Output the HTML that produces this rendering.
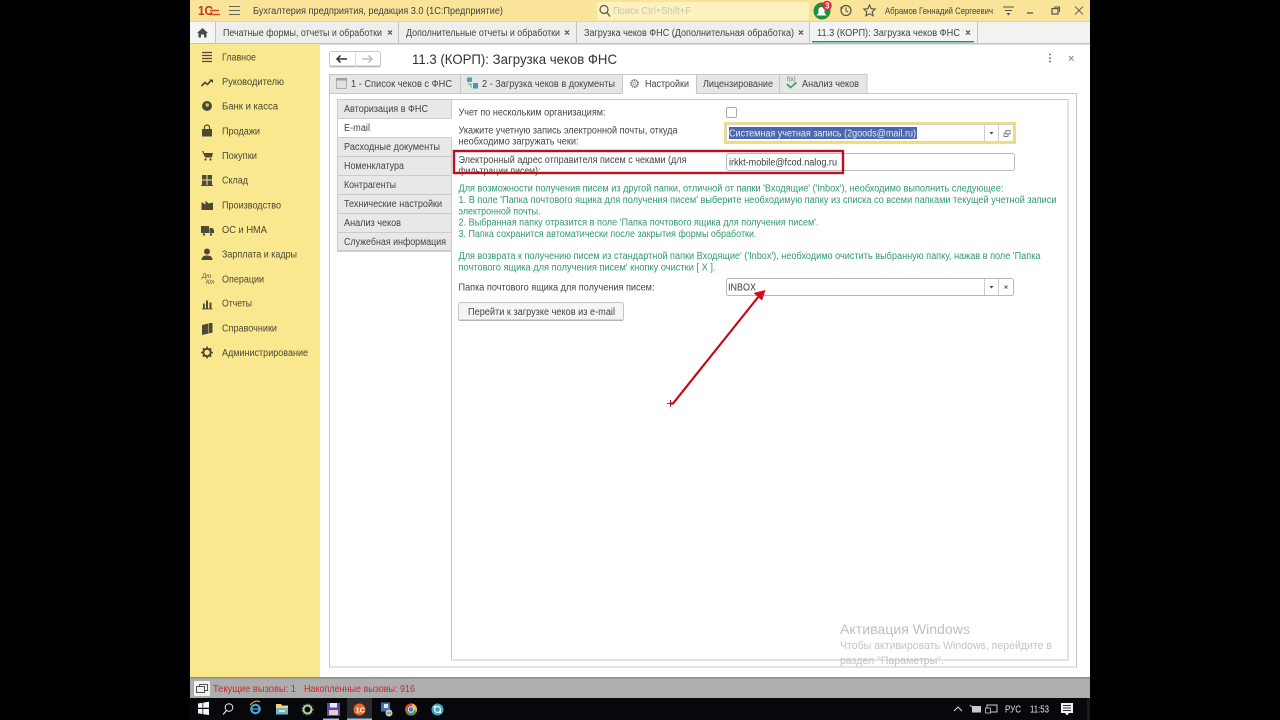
<!DOCTYPE html>
<html lang="ru"><head><meta charset="utf-8"><title>11.3 (КОРП): Загрузка чеков ФНС</title>
<style>
html,body{margin:0;padding:0;background:#000;width:1280px;height:720px;overflow:hidden}
svg{display:block;position:absolute;left:0;top:0;filter:blur(.35px)}
text{font-family:"Liberation Sans",sans-serif;font-size:10px;fill:#444442}
.g text,text.g{fill:#2f9a6c}
.s text{fill:#4a4734}
</style></head><body>
<svg width="1280" height="720" viewBox="0 0 1280 720" xmlns="http://www.w3.org/2000/svg">
<rect width="1280" height="720" fill="#000"/>
<rect x="190" y="0" width="900" height="698" fill="#fff"/>
<!-- title bar -->
<rect x="190" y="0" width="900" height="22" fill="#f9e49a"/>
<rect x="190" y="21" width="900" height="1" fill="#e3d6a0"/>
<text x="198" y="15" style="font-size:13px;font-weight:bold;fill:#c8331c" textLength="15" lengthAdjust="spacingAndGlyphs">1С</text>
<path d="M210 10.500h9M210 14.500h10" stroke="#d24a22" stroke-width="1.500"/>
<path d="M229 6.500h11M229 10.500h11M229 14.500h11" stroke="#66655a" stroke-width="1.100"/>
<text x="253" y="14" textLength="250" lengthAdjust="spacingAndGlyphs">Бухгалтерия предприятия, редакция 3.0  (1С:Предприятие)</text>
<rect x="597" y="2" width="212" height="18" rx="2" fill="#fdf1bd"/>
<circle cx="604" cy="9.500" r="4" fill="none" stroke="#555" stroke-width="1.200"/><path d="M607 12.500l3 4" stroke="#555" stroke-width="1.300"/>
<text x="613" y="14" style="fill:#c9c5b0" textLength="78" lengthAdjust="spacingAndGlyphs">Поиск Ctrl+Shift+F</text>
<!-- bell -->
<circle cx="822" cy="11" r="8.500" fill="#1f8f40"/>
<path d="M816.500 15.500l2-2.500v-3a3 3 0 0 1 6 0v3l2 2.500z" fill="#fff"/>
<circle cx="827" cy="5.500" r="4.800" fill="#dd2c3a"/>
<text x="825" y="8.500" style="font-size:8px;fill:#fff;font-weight:bold">3</text>
<circle cx="846" cy="10.500" r="5" fill="none" stroke="#55544a" stroke-width="1.200"/><path d="M846 7.500v3.200l2.300 1.500" fill="none" stroke="#55544a"/><path d="M840 7l1 3 2-2z" fill="#55544a"/>
<path d="M869.500 5l1.700 3.700 4 .4-3 2.700.9 4-3.600-2.100-3.600 2.100.9-4-3-2.700 4-.4z" fill="none" stroke="#55544a" stroke-width="1.100"/>
<text x="885" y="14" style="font-size:9px" textLength="108" lengthAdjust="spacingAndGlyphs">Абрамов Геннадий Сергеевич</text>
<path d="M1003 7h11M1005 10.500h7" stroke="#55544a" stroke-width="1.100"/><path d="M1006.500 13h4l-2 2.500z" fill="#55544a"/>
<path d="M1027 13h6" stroke="#55544a" stroke-width="1.300"/>
<rect x="1052" y="8.500" width="6" height="5.500" fill="none" stroke="#55544a" stroke-width="1.200"/><path d="M1054 7h5.500v5" fill="none" stroke="#55544a"/>
<path d="M1075 6.500l8 8M1083 6.500l-8 8" stroke="#66655a" stroke-width="1"/>
<!-- tabs -->
<rect x="190" y="22" width="900" height="22" fill="#eeeeee"/>
<rect x="190" y="43" width="900" height="1.500" fill="#c2c2c2"/>
<rect x="977" y="22" width="113" height="21" fill="#f2f2f2"/>
<rect x="809" y="22" width="168" height="21" fill="#f4f4f4"/>
<rect x="190" y="22" width="25" height="21" fill="#f4f4f4"/>
<path d="M215.500 22v21M398.500 22v21M576.500 22v21M809.500 22v21M977.500 22v21" stroke="#c4c4c4"/>
<path d="M197 33l5.500-5 5.500 5h-1.500v4.500h-2.500v-3h-3v3h-2.500V33z" fill="#4a4a4a"/>
<text x="223" y="36" textLength="159" lengthAdjust="spacingAndGlyphs">Печатные формы, отчеты и обработки</text>
<text x="406" y="36" textLength="154" lengthAdjust="spacingAndGlyphs">Дополнительные отчеты и обработки</text>
<text x="584" y="36" textLength="210" lengthAdjust="spacingAndGlyphs">Загрузка чеков ФНС (Дополнительная обработка)</text>
<text x="817" y="36" textLength="143" lengthAdjust="spacingAndGlyphs">11.3 (КОРП): Загрузка чеков ФНС</text>
<path d="M388 30.500l4 4M392 30.500l-4 4M565 30.500l4 4M569 30.500l-4 4M799 30.500l4 4M803 30.500l-4 4M966 30.500l4 4M970 30.500l-4 4" stroke="#444" stroke-width="1.200"/>
<rect x="812" y="41" width="162" height="1.500" fill="#1d9a5f"/>
<!-- sidebar -->
<rect x="190" y="44" width="130" height="634" fill="#fae88f"/>
<g class="s">
<text x="222" y="60.500" textLength="34" lengthAdjust="spacingAndGlyphs">Главное</text>
<text x="222" y="85" textLength="62" lengthAdjust="spacingAndGlyphs">Руководителю</text>
<text x="222" y="109.500" textLength="56" lengthAdjust="spacingAndGlyphs">Банк и касса</text>
<text x="222" y="134.500" textLength="38" lengthAdjust="spacingAndGlyphs">Продажи</text>
<text x="222" y="159" textLength="35" lengthAdjust="spacingAndGlyphs">Покупки</text>
<text x="222" y="183.500" textLength="26" lengthAdjust="spacingAndGlyphs">Склад</text>
<text x="222" y="208.500" textLength="59" lengthAdjust="spacingAndGlyphs">Производство</text>
<text x="222" y="233" textLength="45" lengthAdjust="spacingAndGlyphs">ОС и НМА</text>
<text x="222" y="257.500" textLength="75" lengthAdjust="spacingAndGlyphs">Зарплата и кадры</text>
<text x="222" y="282.500" textLength="42" lengthAdjust="spacingAndGlyphs">Операции</text>
<text x="222" y="306.500" textLength="30" lengthAdjust="spacingAndGlyphs">Отчеты</text>
<text x="222" y="331.500" textLength="55" lengthAdjust="spacingAndGlyphs">Справочники</text>
<text x="222" y="356" textLength="86" lengthAdjust="spacingAndGlyphs">Администрирование</text>
</g>
<g fill="#4c4a34" stroke="none">
<path d="M202 52.500h10M202 55.500h10M202 58.500h10M202 61.500h10" stroke="#4c4a34" stroke-width="1.300"/>
<path d="M201.500 86l3.500-3.500 2.500 2 3.500-4" fill="none" stroke="#4c4a34" stroke-width="1.700"/><path d="M209 79.500h4v3.500z"/>
<circle cx="207" cy="106" r="5"/><circle cx="207.300" cy="105" r="1.700" fill="#c9bf7a"/>
<path d="M202 129h10v7.500h-10z"/><path d="M204.500 129v-1.500a2.500 2.500 0 0 1 5 0v1.500" fill="none" stroke="#4c4a34" stroke-width="1.200"/>
<path d="M202 151h1.500l.5 2h9l-1.200 4.500h-6.600z"/><circle cx="205.500" cy="159.500" r="1.100"/><circle cx="210.500" cy="159.500" r="1.100"/>
<path d="M202 175h4.500v4.500H202zM207.500 175h4.500v4.500h-4.500zM202 180.500h4.500v4.500H202zM207.500 180.500h4.500v4.500h-4.500z"/><rect x="201" y="185" width="12" height="1"/>
<path d="M201.500 210v-8l4 2.500v-4l3 3 4.500-1v7.500z"/>
<path d="M201 226h8v7h-8zM209.500 228h3l1.500 2v3h-4.500z"/><circle cx="204" cy="234.500" r="1.200"/><circle cx="211" cy="234.500" r="1.200"/>
<circle cx="207" cy="251.500" r="3"/><path d="M201.500 260c0-3.500 2.500-4.500 5.500-4.500s5.500 1 5.500 4.500z"/>
<path d="M203 308.500h1.800v-5H203zM206 308.500h2v-8h-2zM209.500 308.500h2v-6h-2z"/><rect x="202" y="308.500" width="10.500" height=".9"/>
<path d="M202 325l6.500-1.500v10l-6.500 1.500zM209 323h3.500v9.500l-3.500 1z"/>
<circle cx="207" cy="352.500" r="3.700" fill="none" stroke="#4c4a34" stroke-width="2"/>
<path d="M207 346.500v2M207 356.500v2M201 352.500h2M211 352.500h2M202.800 348.300l1.400 1.400M209.800 355.300l1.400 1.400M211.200 348.300l-1.400 1.400M204.200 355.300l-1.400 1.400" stroke="#4c4a34" stroke-width="1.600"/>
</g>
<text x="202" y="278" style="font-size:6px;fill:#4c4a34;font-style:italic">Дт</text>
<text x="206" y="284" style="font-size:6px;fill:#4c4a34;font-style:italic">Кт</text>
<!-- nav buttons -->
<rect x="329.500" y="51.500" width="51" height="15.500" rx="2" fill="#fff" stroke="#c8c8c8"/>
<rect x="330" y="65.500" width="50" height="1.500" fill="#bbb"/>
<path d="M355.500 52v15" stroke="#ddd"/>
<path d="M337 59h10" stroke="#3a3a3a" stroke-width="1.600"/><path d="M340.500 55.500L337 59l3.500 3.500" fill="none" stroke="#3a3a3a" stroke-width="1.600"/>
<path d="M362 59h10" stroke="#b5b5b5" stroke-width="1.300"/><path d="M368.500 55.500L372 59l-3.500 3.500" fill="none" stroke="#b5b5b5" stroke-width="1.300"/>
<text x="412" y="64" style="font-size:14px;fill:#333" textLength="205" lengthAdjust="spacingAndGlyphs">11.3 (КОРП): Загрузка чеков ФНС</text>
<circle cx="1050" cy="54.500" r=".9" fill="#555"/><circle cx="1050" cy="58" r=".9" fill="#555"/><circle cx="1050" cy="61.500" r=".9" fill="#555"/>
<path d="M1069 56l4.500 4.500M1073.500 56l-4.500 4.500" stroke="#888"/>
<!-- form tabs -->
<rect x="329" y="74" width="538" height="19" fill="#e6e6e6"/>
<rect x="622" y="74" width="74" height="20" fill="#fff"/>
<path d="M329.500 93V74.500h537.500V93M460.500 74v19M622.500 74v19M696.500 74v19M779.500 74v19" fill="none" stroke="#c6c6c6"/>
<rect x="336.500" y="78.500" width="10" height="10" fill="#e0e0e0" stroke="#a8b0b0"/><rect x="336" y="78" width="11" height="2.500" fill="#98a4a4"/>
<rect x="467" y="77.500" width="5" height="4.500" fill="#4aa0c0"/><rect x="473" y="83" width="5" height="5.500" fill="#4f93b0"/>
<path d="M468 84h3v3.500" fill="none" stroke="#5a9a8c"/>
<text x="351" y="87" textLength="101" lengthAdjust="spacingAndGlyphs">1 - Список чеков с ФНС</text>
<text x="482" y="87" textLength="133" lengthAdjust="spacingAndGlyphs">2 - Загрузка чеков в документы</text>
<text x="645" y="87" textLength="44" lengthAdjust="spacingAndGlyphs">Настройки</text>
<text x="703" y="87" textLength="70" lengthAdjust="spacingAndGlyphs">Лицензирование</text>
<text x="802" y="87" textLength="57" lengthAdjust="spacingAndGlyphs">Анализ чеков</text>
<circle cx="634.500" cy="83.500" r="3.500" fill="none" stroke="#777" stroke-width="1.800" stroke-dasharray="1.500 .7"/>
<circle cx="634.500" cy="83.500" r="1.500" fill="none" stroke="#999" stroke-width=".7"/>
<text x="787" y="81" style="font-size:6px;fill:#5a7a6a">f(x)</text>
<path d="M787 84l3.500 3.500 6-5" fill="none" stroke="#35a060" stroke-width="1.700"/>
<!-- panels -->
<rect x="329.500" y="93.500" width="747" height="573.500" fill="#fff" stroke="#c8c8c8"/>
<rect x="622.500" y="92.500" width="73" height="2" fill="#fff"/>
<rect x="451.500" y="99.500" width="616.500" height="560.500" fill="#fff" stroke="#c8c8c8"/>
<!-- left tabs -->
<rect x="337" y="99" width="115" height="152" fill="#e8e8e8"/>
<rect x="337" y="118" width="115" height="19" fill="#fff"/>
<path d="M337.500 99.500h114M337.500 118.500h114M337.500 137.500h114M337.500 156.500h114M337.500 175.500h114M337.500 194.500h114M337.500 213.500h114M337.500 232.500h114M337.500 99.500v152M451.500 99v19M451.500 137v114" fill="none" stroke="#cbcbcb"/>
<path d="M337.500 251h114" stroke="#b4b4b4" stroke-width="1.200"/>
<text x="344" y="112" textLength="84" lengthAdjust="spacingAndGlyphs">Авторизация в ФНС</text>
<text x="344" y="131" textLength="26" lengthAdjust="spacingAndGlyphs">E-mail</text>
<text x="344" y="150" textLength="96" lengthAdjust="spacingAndGlyphs">Расходные документы</text>
<text x="344" y="169" textLength="60" lengthAdjust="spacingAndGlyphs">Номенклатура</text>
<text x="344" y="188" textLength="52" lengthAdjust="spacingAndGlyphs">Контрагенты</text>
<text x="344" y="207" textLength="98" lengthAdjust="spacingAndGlyphs">Технические настройки</text>
<text x="344" y="226" textLength="57" lengthAdjust="spacingAndGlyphs">Анализ чеков</text>
<text x="344" y="245" textLength="102" lengthAdjust="spacingAndGlyphs">Служебная информация</text>
<!-- form -->
<text x="458.500" y="115.500" textLength="147" lengthAdjust="spacingAndGlyphs">Учет по нескольким организациям:</text>
<rect x="726.500" y="107.500" width="10" height="10" rx="1.500" fill="#fff" stroke="#aaa"/>
<text x="458.500" y="133.500" textLength="219" lengthAdjust="spacingAndGlyphs">Укажите учетную запись электронной почты, откуда</text>
<text x="458.500" y="144.500" textLength="120" lengthAdjust="spacingAndGlyphs">необходимо загружать чеки:</text>
<rect x="725" y="123" width="290" height="20" fill="#fff" stroke="#ecd65c" stroke-width="1.600"/>
<rect x="726.500" y="124.500" width="287" height="17" fill="#fff" stroke="#d4d4d4"/>
<rect x="729" y="127" width="188" height="12" fill="#4a66ae"/>
<text x="729" y="136.500" style="fill:#e8ecf6" textLength="187" lengthAdjust="spacingAndGlyphs">Системная учетная запись (2goods@mail.ru)</text>
<path d="M984.500 125v16M998.500 125v16" stroke="#ccc"/>
<path d="M989.500 132h4l-2 2.500z" fill="#444"/>
<rect x="1004" y="133" width="4" height="3.500" fill="none" stroke="#666" stroke-width=".8"/><rect x="1006" y="130.500" width="4" height="3.500" fill="#fff" stroke="#666" stroke-width=".8"/>
<!-- email field -->
<rect x="726.500" y="153.500" width="288" height="17" rx="2" fill="#fff" stroke="#bcbcbc"/>
<text x="729" y="165.500" style="fill:#3c3c3c" textLength="108" lengthAdjust="spacingAndGlyphs">irkkt-mobile@fcod.nalog.ru</text>
<text x="458.500" y="163" textLength="228" lengthAdjust="spacingAndGlyphs">Электронный адрес отправителя писем с чеками (для</text>
<text x="458.500" y="174" textLength="82" lengthAdjust="spacingAndGlyphs">фильтрации писем):</text>
<rect x="454" y="151" width="389" height="22" fill="none" stroke="#bb1020" stroke-width="2.400"/>
<!-- green text -->
<g class="g">
<text x="458.500" y="191.500" textLength="545" lengthAdjust="spacingAndGlyphs">Для возможности получения писем из другой папки, отличной от папки 'Входящие' ('Inbox'), необходимо выполнить следующее:</text>
<text x="458.500" y="203" textLength="598" lengthAdjust="spacingAndGlyphs">1. В поле 'Папка почтового ящика для получения писем' выберите необходимую папку из списка со всеми папками текущей учетной записи</text>
<text x="458.500" y="214.500" textLength="82" lengthAdjust="spacingAndGlyphs">электронной почты.</text>
<text x="458.500" y="225.500" textLength="360" lengthAdjust="spacingAndGlyphs">2. Выбранная папку отразится в поле 'Папка почтового ящика для получения писем'.</text>
<text x="458.500" y="237" textLength="298" lengthAdjust="spacingAndGlyphs">3. Папка сохранится автоматически после закрытия формы обработки.</text>
<text x="458.500" y="259" textLength="582" lengthAdjust="spacingAndGlyphs">Для возврата к получению писем из стандартной папки Входящие' ('Inbox'), необходимо очистить выбранную папку, нажав в поле 'Папка</text>
<text x="458.500" y="270.500" textLength="257" lengthAdjust="spacingAndGlyphs">почтового ящика для получения писем'  кнопку очистки [ X ].</text>
</g>
<text x="458.500" y="290.500" textLength="196" lengthAdjust="spacingAndGlyphs">Папка почтового ящика для получения писем:</text>
<rect x="726.500" y="278.500" width="287" height="17" rx="2" fill="#fff" stroke="#b8b8b8"/>
<path d="M984.500 279v16M998.500 279v16" stroke="#ccc"/>
<text x="728" y="290.500" style="fill:#3c3c3c" textLength="28" lengthAdjust="spacingAndGlyphs">INBOX</text>
<path d="M989.500 286h4l-2 2.500z" fill="#444"/>
<path d="M1004.500 285.500l3 3M1007.500 285.500l-3 3" stroke="#666" stroke-width=".9"/>
<rect x="458.500" y="302.500" width="165" height="18" rx="2" fill="#f5f5f5" stroke="#c4c4c4"/>
<rect x="459" y="319.500" width="164" height="1.500" fill="#b5b5b5"/>
<text x="468" y="315" textLength="147" lengthAdjust="spacingAndGlyphs">Перейти к загрузке чеков из e-mail</text>
<!-- arrow -->
<path d="M671 403.500h2L759 296" fill="none" stroke="#c40a18" stroke-width="2.200"/>
<path d="M765.500 290l-12 3 8.500 7.500z" fill="#d80a1a"/>
<path d="M667 403.500h7M670.500 400v7" stroke="#a52030" stroke-width="1.100"/>
<!-- watermark -->
<text x="840" y="634" style="font-size:14px;fill:#bfbfbf" textLength="130" lengthAdjust="spacingAndGlyphs">Активация Windows</text>
<text x="840" y="649" style="font-size:11px;fill:#c4c4c4" textLength="212" lengthAdjust="spacingAndGlyphs">Чтобы активировать Windows, перейдите в</text>
<text x="840" y="664" style="font-size:11px;fill:#c4c4c4" textLength="104" lengthAdjust="spacingAndGlyphs">раздел "Параметры".</text>
<!-- status -->
<rect x="190" y="678" width="900" height="20" fill="#aeaeae"/>
<rect x="190" y="677" width="900" height="1.500" fill="#8f8f8f"/>
<rect x="194" y="681" width="16" height="15" rx="1" fill="#f2f2f2"/>
<rect x="199.500" y="684.500" width="8" height="6" fill="none" stroke="#555"/><rect x="196.500" y="686.500" width="8" height="6" fill="#f2f2f2" stroke="#555"/>
<text x="213" y="692" style="fill:#c42a35" textLength="83" lengthAdjust="spacingAndGlyphs">Текущие вызовы: 1</text>
<text x="304" y="692" style="fill:#c42a35" textLength="111" lengthAdjust="spacingAndGlyphs">Накопленные вызовы: 916</text>
<!-- taskbar -->
<rect x="190" y="698" width="900" height="22" fill="#07080c"/>
<rect x="347" y="698" width="25" height="22" fill="#2a2b2e"/>
<path d="M198 703.500l4.500-.7v5h-4.500zM203.200 702.600l5.800-.9v6.100h-5.800zM198 709h4.500v5l-4.500-.6zM203.200 709h5.800v6l-5.800-.8z" fill="#f5f5f5"/>
<circle cx="229" cy="707.500" r="3.800" fill="none" stroke="#e8e8e8" stroke-width="1"/><path d="M226.500 710.500l-3.500 4" stroke="#e8e8e8" stroke-width="1.100"/>
<circle cx="255.500" cy="709" r="4.200" fill="none" stroke="#4da3d8" stroke-width="2.200"/><path d="M251 709h9" stroke="#4da3d8" stroke-width="1.300"/><path d="M250 705q6-6 10-3" fill="none" stroke="#e6c040" stroke-width="1"/>
<path d="M276 704h5l1 1.500h6v9h-12z" fill="#f0d67a"/><rect x="276" y="708" width="12" height="6.500" fill="#6ab4d8"/><rect x="279" y="710" width="6" height="2" fill="#f0e0a0"/>
<circle cx="307.500" cy="709.500" r="4" fill="none" stroke="#bcd0a8" stroke-width="2"/><circle cx="307.500" cy="709.500" r="5.500" fill="none" stroke="#5a8a40" stroke-width="1" stroke-dasharray="1.500 1.500"/>
<rect x="327" y="703" width="13" height="13" fill="#5a4ab0"/><rect x="330" y="703" width="7" height="4.500" fill="#e8e8f4"/><rect x="329" y="710" width="9" height="5" fill="#f0c8d0"/>
<circle cx="359.500" cy="709.500" r="6" fill="#e8662a"/><text x="355.500" y="712.500" style="font-size:7.500px;font-weight:bold;fill:#fff">1С</text>
<rect x="381" y="702.500" width="9" height="9" fill="#3f6fb8"/><rect x="384" y="704" width="4" height="4" fill="#dfe8f4"/><circle cx="389" cy="713" r="3.500" fill="#c4c8c0"/><path d="M387 713h4" stroke="#4a7a4a"/>
<circle cx="411" cy="709.500" r="6" fill="#d8473a"/><path d="M411 703.500a6 6 0 0 1 5.200 9l-3-5z" fill="#e8c13a"/><path d="M405.800 712.500a6 6 0 0 0 10.400 0l-3-1z" fill="#4aa050"/><circle cx="411" cy="709.500" r="2.800" fill="#3a7ed8" stroke="#eee" stroke-width=".9"/>
<circle cx="437.500" cy="709.500" r="6" fill="#3ea7c0"/><circle cx="437.500" cy="709.500" r="3" fill="none" stroke="#e8f4f4" stroke-width="1.200"/><circle cx="435" cy="707" r="1.300" fill="#eef"/><circle cx="440" cy="712" r="1.300" fill="#eef"/>
<rect x="323" y="718.500" width="16" height="1.500" fill="#9ac4e4"/><rect x="347" y="718.500" width="25" height="1.500" fill="#9ac4e4"/>
<!-- tray -->
<path d="M954 711l4-4 4 4" fill="none" stroke="#ddd" stroke-width="1"/>
<rect x="972" y="706" width="9" height="6.500" fill="#c8c8c8"/><path d="M970 705l2 2" stroke="#ccc"/>
<rect x="987" y="705" width="10" height="7" fill="none" stroke="#ccc"/><rect x="985.500" y="708" width="5" height="5" fill="#07080c" stroke="#ccc" stroke-width=".8"/>
<text x="1005" y="712.500" style="fill:#e6e6e6" textLength="16" lengthAdjust="spacingAndGlyphs">РУС</text>
<text x="1030" y="712.500" style="fill:#e6e6e6" textLength="19" lengthAdjust="spacingAndGlyphs">11:53</text>
<path d="M1061 703h12v10h-4l-2 2.500-2-2.500h-4z" fill="#f0f0f0"/>
<path d="M1063 705.500h8M1063 708h8M1063 710.500h8" stroke="#333" stroke-width=".9"/>
<rect x="1087" y="698" width="3" height="22" fill="#1a1a1c"/>
</svg>
</body></html>
